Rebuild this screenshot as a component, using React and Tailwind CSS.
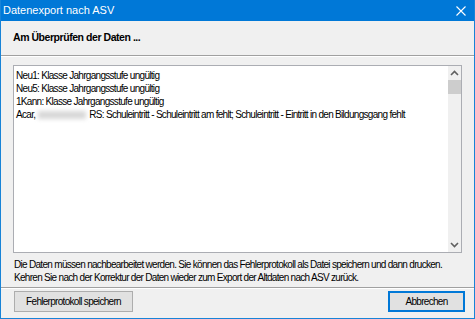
import React from 'react';

const lines = [
  'Neu1: Klasse Jahrgangsstufe ungültig',
  'Neu5: Klasse Jahrgangsstufe ungültig',
  '1Kann: Klasse Jahrgangsstufe ungültig',
];

function ScrollArrow({ up }) {
  return (
    <svg width="9" height="6" viewBox="0 0 9 6" className="block">
      <path d={up ? 'M1 5 L4.5 1.5 L8 5' : 'M1 1 L4.5 4.5 L8 1'} fill="none" stroke="#606060" strokeWidth="1.6" />
    </svg>
  );
}

export default function App() {
  return (
    <div className="w-[475px] h-[319px] flex flex-col bg-[#f0f0f0] border border-t-0 border-[#1883d7] font-['Liberation_Sans',Arial,sans-serif] text-[10px] tracking-[-0.7px] text-black overflow-hidden">
      {/* title bar */}
      <div className="h-[21px] shrink-0 flex items-center justify-between bg-[#0078d7] text-white pl-[3px] pr-[9px] -mx-px">
        <span className="text-[11px] tracking-normal">Datenexport nach ASV</span>
        <svg width="10" height="10" viewBox="0 0 10 10">
          <path d="M0.5 0.5 L9.5 9.5 M9.5 0.5 L0.5 9.5" stroke="white" strokeWidth="1.1" />
        </svg>
      </div>

      {/* header */}
      <div className="h-[35px] shrink-0 flex items-center pl-[12px] border-b border-[#a0a0a0] shadow-[0_1px_0_#ffffff]">
        <span className="font-bold text-[10.5px] tracking-[-0.45px]">Am Überprüfen der Daten ...</span>
      </div>

      {/* body */}
      <div className="flex-1 flex flex-col px-[12px] pt-[9px]">
        <div className="h-[188px] flex bg-white border border-[#abadb3]">
          <div className="flex-1 pl-[2px] pt-[3px] leading-[13px] whitespace-nowrap overflow-hidden">
            {lines.map((l) => (
              <div key={l}>{l}</div>
            ))}
            <div>
              Acar,<span className="inline-block align-middle w-[48px] h-[8px] mx-[3px] bg-[#d8d8d8] blur-[2px]" />RS: Schuleintritt - Schuleintritt am fehlt; Schuleintritt - Eintritt in den Bildungsgang fehlt
            </div>
          </div>
          <div className="w-[13px] flex flex-col items-center bg-[#f0f0f0]">
            <div className="h-[14px] flex items-center justify-center"><ScrollArrow up /></div>
            <div className="w-[13px] h-[14px] bg-[#cdcdcd]" />
            <div className="flex-1" />
            <div className="h-[14px] flex items-center justify-center"><ScrollArrow /></div>
          </div>
        </div>

        <div className="pt-[5px] pl-[1px] leading-[13px]">
          <div>Die Daten müssen nachbearbeitet werden. Sie können das Fehlerprotokoll als Datei speichern und dann drucken.</div>
          <div>Kehren Sie nach der Korrektur der Daten wieder zum Export der Altdaten nach ASV zurück.</div>
        </div>
      </div>

      {/* footer */}
      <div className="h-[31px] shrink-0 flex items-start justify-between border-t border-[#a0a0a0] shadow-[inset_0_1px_0_#ffffff] pl-[13px] pr-[9px] pt-[3px]">
        <button className="w-[119px] h-[21px] bg-[#e1e1e1] border border-[#adadad]">Fehlerprotokoll speichern</button>
        <button className="w-[77px] h-[21px] bg-[#e1e1e1] border border-[#0078d7] shadow-[inset_0_0_0_1px_#0078d7]">Abbrechen</button>
      </div>
    </div>
  );
}
